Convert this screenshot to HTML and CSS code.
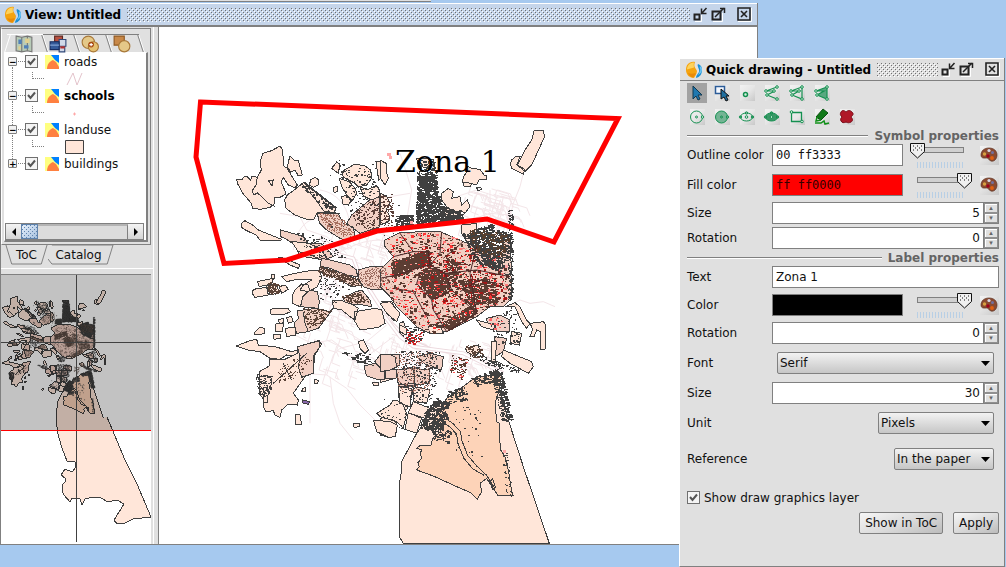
FILE: index.html
```html
<!DOCTYPE html>
<html lang="en">
<head>
<meta charset="utf-8">
<title>View: Untitled</title>
<link rel="stylesheet" href="styles.css">
</head>
<body>
<svg class="defs" aria-hidden="true">
  <symbol id="logo" viewBox="0 0 18 18"><path d="M10 1C4 0 1 4 1 9c0 5 4 8 8 8 1-2 3-4 3-7-1-3-4-4-2-9z" fill="#f5a30f"/><path d="M9 1.500C5 1 2 5 2 8.500c2-1 5-1 7-2 0-1-.5-3 0-5z" fill="#fdd25c"/><path d="M3 12c2 1 5 1 8 0-1 2-2 4-3 4.500-2-.5-4-2-5-4.500z" fill="#e88a08"/><path d="M13 3c-1.500 2 2 5 1 8-1 2-3 3-3 6 4-1 6-4 6-8 0-3-1-5-4-6z" fill="#1b8fd4"/><path d="M15 5c-1 2 1 3 0 5l-2 4c3-2 4-3 4-6 0-1-1-2-2-3z" fill="#6cc4f2"/></symbol>
  <symbol id="w-min" viewBox="0 0 15 15"><path d="M2 14.500h6.500V8" fill="none" stroke="#fff"/><path d="M1.500 7.500h5v5h-5z" fill="none" stroke="#222" stroke-width="2"/><path d="M8.500 1.500v5h5M9 6l4.500-5" fill="none" stroke="#222" stroke-width="1.500"/></symbol>
  <symbol id="w-max" viewBox="0 0 15 15"><path d="M2 14.500h9.500V6" fill="none" stroke="#fff"/><path d="M1.500 4.500h8v8h-8z" fill="none" stroke="#222" stroke-width="2"/><path d="M4 10l9-9M9 1.500h4.500V6" fill="none" stroke="#222" stroke-width="1.500"/></symbol>
  <symbol id="w-close" viewBox="0 0 15 15"><path d="M1 14.500h13.500V1" fill="none" stroke="#fff"/><path d="M1 1h12v12H1z" fill="none" stroke="#222" stroke-width="1.600"/><path d="M4 4l6 6M10 4l-6 6" stroke="#222" stroke-width="1.600"/></symbol>
  <symbol id="layer" viewBox="0 0 14 14"><path d="M0 0h14v14H0z" fill="#ffff80"/><path d="M6 0h8v8L10 5z" fill="#0080ff"/><path d="M2 14c0-5 3-8 6-9l3 2 3 5v2z" fill="#ff8040"/></symbol>
  <symbol id="palette" viewBox="0 0 18 18"><path d="M9 2c5 0 8 3 8 7s-3 7-6 6-2-3-4-3-6 1-6-3 3-7 8-7z" fill="#8a4a30" stroke="#5e3020" stroke-width=".7"/><circle cx="9" cy="4.500" r="1.600" fill="#d9d9e8"/><circle cx="4.500" cy="8" r="1.700" fill="#d8a040"/><circle cx="8" cy="10" r="1.700" fill="#a00018"/><circle cx="12.500" cy="6.500" r="1.500" fill="#7070a0"/><circle cx="12" cy="12" r="1.900" fill="#e06010"/></symbol>
</svg>

<main class="desktop">
  <div class="back-window"></div>

  <section class="window view" aria-label="View: Untitled">
    <header class="titlebar">
      <svg class="logo"><use href="#logo"/></svg>
      <h1 class="title">View: Untitled</h1>
      <span class="bumps"></span>
      <button class="wbtn" aria-label="Minimize"><svg><use href="#w-min"/></svg></button>
      <button class="wbtn" aria-label="Maximize"><svg><use href="#w-max"/></svg></button>
      <button class="wbtn close" aria-label="Close"><svg><use href="#w-close"/></svg></button>
    </header>
    <div class="workspace">
      <aside class="side">
        <div class="toc">
          <div class="tabs-top">
            <button class="tab first" aria-label="Map"><svg viewBox="0 0 16 16"><path d="M1 1l5 1 5-1 4 1v13l-4-1-5 1-5-1z" fill="#b8cbb8" stroke="#777"/><path d="M6 2v13M11 1v13" stroke="#777"/><path d="M3 4h3v4H3zM8 9h4v3H8z" fill="#5080b8"/><path d="M9 3h4v4H9zM3 10h2v3H3z" fill="#e0d090"/></svg></button>
            <button class="tab" aria-label="Tables"><svg viewBox="0 0 16 16"><path d="M5 1h7v5H5z" fill="#b85040" stroke="#602820"/><path d="M9 4h6v6H9zM9 10h5v5H9z" fill="#d0d8e8" stroke="#304878"/><path d="M1 6h8v7H1z" fill="#345a9a" stroke="#182c60"/><path d="M1 9h8" stroke="#88a8d8"/><path d="M10 11h4" stroke="#b03030" stroke-width="2"/></svg></button>
            <button class="tab" aria-label="Overlap"><svg viewBox="0 0 16 16"><circle cx="6.500" cy="6.500" r="5.500" fill="#e4c888" stroke="#a87838"/><circle cx="11" cy="10.500" r="4.500" fill="#e4c070" stroke="#a87838"/><circle cx="9" cy="8.500" r="2.500" fill="#a84810"/><path d="M7.500 8.500h3M9 7v3" stroke="#fff"/></svg></button>
            <button class="tab" aria-label="Shapes"><svg viewBox="0 0 16 16"><path d="M1 1h9v8H1z" fill="#c88848" stroke="#905820"/><circle cx="10" cy="10" r="5" fill="#e4c888" stroke="#a87838"/></svg></button>
          </div>
          <div class="tree-box">
            <ul class="tree">
              <li><div class="node"><button class="toggle" aria-label="Collapse roads">−</button><input type="checkbox" id="l1" checked><svg class="lay"><use href="#layer"/></svg><label for="l1">roads</label></div>
                <div class="legend"><svg viewBox="0 0 20 14"><path d="M2 13L8 1l4 12 5-12" fill="none" stroke="#e4c4cc"/></svg></div></li>
              <li><div class="node"><button class="toggle" aria-label="Collapse schools">−</button><input type="checkbox" id="l2" checked><svg class="lay"><use href="#layer"/></svg><label for="l2" class="active">schools</label></div>
                <div class="legend"><svg viewBox="0 0 20 14"><path d="M8 8h3M9.500 6.500v3" stroke="#ffa8a8"/></svg></div></li>
              <li><div class="node"><button class="toggle" aria-label="Collapse landuse">−</button><input type="checkbox" id="l3" checked><svg class="lay"><use href="#layer"/></svg><label for="l3">landuse</label></div>
                <div class="legend"><svg viewBox="0 0 20 14"><path d="M.5.5h18v13H.5z" fill="#ffe6d9" stroke="#404040"/></svg></div></li>
              <li><div class="node"><button class="toggle" aria-label="Expand buildings">+</button><input type="checkbox" id="l4" checked><svg class="lay"><use href="#layer"/></svg><label for="l4">buildings</label></div></li>
            </ul>
            <div class="hscroll"><button aria-label="Scroll left"><svg viewBox="0 0 8 8"><path d="M6 0v8L2 4z"/></svg></button><span class="thumb"></span><span class="track"></span><button aria-label="Scroll right"><svg viewBox="0 0 8 8"><path d="M2 0v8l4-4z"/></svg></button></div>
          </div>
        </div>
        <div class="tabs-bottom">
          <button class="btab"><svg viewBox="0 0 45 20" preserveAspectRatio="none"><path d="M1 0l6 19h31l6-19" fill="none" stroke="#808080"/></svg><span>ToC</span></button>
          <button class="btab"><svg viewBox="0 0 68 20" preserveAspectRatio="none"><path d="M4 0h63l-6 19H4L0 14" fill="none" stroke="#808080"/></svg><span>Catalog</span></button>
        </div>
        <div class="split-h"></div>
        <svg class="overview" viewBox="1 275 150 269" preserveAspectRatio="xMinYMin slice" role="img" aria-label="Overview map">
          <use href="#city" transform="translate(-77 247) scale(.335)"/>
          <g id="overview-specks" transform="translate(-77 247) scale(.335)"></g>
          <path class="land" d="M57 428l1 6 4 14 5 13 8 1 1 5-4 5-7-3-4 6 4 3v4l-3 3v6l2 4 6 7 2-4 8 1 2 6 3-6 8-2 8 1 7 4 9-2 7 4-10 16 3 4 8-1 8-4 18-2-14-33-12-24-18-43"/>
          <path d="M0 275h151v155H0z" fill="#000" fill-opacity=".24"/>
          <path d="M76.500 275v267M0 342.500h151" stroke="#404040"/>
          <path d="M0 430.500h151" stroke="#f00"/>
        </svg>
      </aside>
      <div class="split-v"></div>
      <svg class="map" viewBox="159 27 598 517" preserveAspectRatio="xMinYMin slice" role="img" aria-label="City map with Zona 1">
        <g id="city-roads" class="roads"></g>
        <g class="roads" transform="translate(220 240) scale(.33333)">
          <path d="M215 280l60 30 60-10 40 30M250 400l70 5 60 40 40 50 50 50M320 405l20-60 20-20 80-20 60-50M330 410l10 80 20 60 40 50M270 400v150M440 350l80-60M340 250l80 50 90 60M300 180l60-80M380 330l-60-30 20-60"/>
        </g>
        <g class="roads wide" transform="translate(220 240) scale(.33333)"><path d="M300-10l60 55 40 10 15 40 50 80 50 75 50 50 60 25"/><path class="core" d="M300-10l60 55 40 10 15 40 50 80 50 75 50 50 60 25"/></g>
        <g class="roads wide" transform="translate(380 210) scale(.33333)"><path d="M0 300l60 80 40 30 150 20 60 30 60 30"/><path class="core" d="M0 300l60 80 40 30 150 20 60 30 60 30"/></g>
        <g class="roads" transform="translate(380 210) scale(.33333)"><path d="M380 290l40-20 30 10 40-5 35 15"/></g>
        <g class="roads" transform="translate(380 90) scale(.33333)"><path d="M430 250l-10 40-20 50-15 60M60 190l20 60 15 50-15 90M30 320l60-10M230 320l60-20 60 20 60 10M270 390l60-20 60 5M300 290l-20 50M330 300v60M370 320l-10 50"/></g>
        <g class="roads" transform="translate(180 90) scale(.33333)"><path d="M300 370l60 10 20 40 60 20 60 50M340 480c10-80 60-110 110-90M420 300c60 10 90 60 90 120M430 510c50-20 100-60 170-60"/></g>
        <g id="city">
          <g class="land" transform="translate(380 370) scale(.33333)">
            <path d="M125 170l-15 20-45 85v25l-5 30v120l-2 50 12 20h438l-78-230-45-140-35-120-50-10-100 70-40 20z"/>
            <path class="orange" d="M200 85l90-65 75-5-7 45-13 40 5 55 10 5-2 40 4 40 13 20 10 40 10 65 5 13h-45l-35-53-20 15 5 25-13 23-17-18-10-5-35-15-70-32-50-18 8-10-4-12 12-14-6-14 6-10-16-5 8-7 35-3 5-20 25-20-20-35 10-20z"/>
            <path class="plain" d="M200 147l20 15 22 23 3 25 18 46 27 32 30 28 25 40M190 157l22 16 18 20 3 25 18 46 27 32 34 20M330 335l8-8 8 25-8 6z"/>
            <path d="M0 145l30-5 20 20-2 30-18 13-30-8zM55 60l45 5-20 55-20-5zM100 95l50 20-15 30-50-17zM85 128l40 17-15 45-35-12zM0 0h45v25L0 38zM50 0h50v50H55z"/>
          </g>
          <g class="land" transform="translate(180 90) scale(.33333)">
            <path d="M300 168l8 12 3 48 11 7 8 15 22 35-7 8-20-8-15-23-7 13 12 27 3 10-18 10-16 0 1 18-15 12-30 6-22-3-4-15-24-28-18-32-2-12 16 2 4-8 10-4 12 12 4-12 16 4 12-22-4-22 8-28 27-8z"/>
            <path class="plain" d="M232 262l-4 23-12 18 6 12 10-7 33 32 20 10M265 272l15-2-4 18z"/>
            <path d="M330 198l12 12 13 2 12 43-12 3-10-18-13 6-10-16 4-18zM392 270l13-8 12 8-2 15-15 7-12-7zM370 278l98 77-6 13h-50l-12 22h-15l-40-15-27-20-4-25 8-15 23-17z"/>
            <path class="plain" d="M372 276l98 78M366 282l40 45 25 36 50 8"/>
            <path class="pink" d="M412 370l63 2 15 28 30 12 5 28-15 15-30-10-40-25-22-22zM302 420l43 12 25 8 15 20 40 2 20 18 15 20-30 10-70-12-10-23-5-10-25-17-18-8zM515 375l30-25 30-25 25-10v95l-60 20-40-30z"/>
            <path d="M184 400l11-8 23 13 17 15 30 12 40 16-5 4-60-2-12-15-28-13-16-10zM470 216l10 6-5 28-20-15zM485 245l40-23 30 6 17 12 3 25-15 20-25 5-10-10-35-18zM478 265l30 10 17 20 5 15-15 25-15-20-15-25zM485 320l15-4 15 14-10 15-17-3zM540 290l20 10 30-15 8 15v20l-23 10-25-12zM588 215h20l8 40-20 15zM460 292l12-2 2 15-12 2z"/>
          </g>
          <g class="land" transform="translate(380 90) scale(.33333)">
            <path d="M395 210l13-12 12 2-10 25 25 13-5 14-35-17-4-13zM462 122h28l4 18-14 30-25 55-20 20-23-20 23-45 20-30zM262 228l13 7 25 3 12 17 8 3v10h-22l-8 17-28-7-14-2 2-16 8-10zM248 276l27 4-5 10-18-2zM110 205l50 3 5 32-25-5-25-10zM0 210l18 10 2 30 5 15-10 20-15-23zM0 310l20 8 10 22-12 20 12 20-5 15-25 10zM185 310l20-15 15 10-5 20 25-5 5 25 17-15 8 20-15 20-15-10-5 25-30 5-15-20 10-20-15-20zM245 405l45-5v50l-30 5-15-25z"/>
            <path class="plain" d="M290 293l12-2 2 8-10 3z"/>
          </g>
          <g class="land" transform="translate(220 240) scale(.33333)">
            <path d="M215 5l45 3 40 17 15 20-20 10-35-15-25-5zM175 52l20 3 45 20-5 10-25-10zM112 125l48-10-5 17-37 8zM100 148l40-6 5 23-40 7-8-12zM140 138l30-3 8 23-28 7zM178 140l17-5 10 13-20 12zM155 105h10v12h-10zM185 110l40-10 45-8h30l5 20-15 30-25 13-25-5 10-15 25-15-45-2-30 7zM225 150l20-18 20 3 5 20-20 20-10 25-22-10v-25zM150 208l15-3 40 2 7 8-17 7-30 3-12-3zM200 232l15-2 5 15-15 5zM175 240l15-5 2 13-14 2zM168 252l22-2-2 25h-20zM195 265l30-3 3 23-28 5zM160 285l20-3 2 13-20 3zM105 275l15-13 15 3v15l-20 5h-13zM48 318l42-16 20-4 5 17 50 5 50 15 17-5v20l-32-5-20 13-30-3-30-20-35-5z"/>
            <path d="M232 320l63-18 10 10-20 33v15l-7 20 2 20-15 5-10 5-35 50 15 20-3 15-27-3-20 18-5 22-15-7-5-13-22 3-8-15 2-20-14-20 2-30-2-35 30-17 2-20 40 2 42-20z"/>
            <path class="pink" d="M248 170l22-20 22 5 6 30-3 20-53-5zM232 212l58-7 40 10 10-10-22 30-23 30-30 10-35 5-8-30 13-15zM232 320l68-18v18l-18 25-2 55-35 12-10-32 5-30zM305 55l25 5 60 15 20 15 2 20-32-5-50-20-30-7zM300 82l70 18 45 20 10 15-30 5-55-30-40-15zM415 90l35-10h45l5 30 15 10-15 30h-40l-30-10-15-25zM370 175l30-17 25-8 25 30 5 20-25-5-55-5z"/>
            <path class="plain" d="M250 215l5 35 10 25M160 430l100-90M190 370l25 50"/>
            <path d="M338 182l22-2 40 15 15 10-10 35-15-10-25-20-25-5zM405 215l60-10 20 5 10 40-20 12-55 8-15-25zM485 185l30-2 15 37-10 20-20-25zM415 305l15-5 15 30-10 10-15-15zM458 428h17v10h-15zM538 250l12-5 10 25-10 20-12-15zM228 525h12l5 30h-17zM285 418l10 4-2 10-10-2zM248 445l10-2v12h-13zM400 552l20-2-2 10-16 2zM470 520l40-25 10-15 25 5 15 35-10 45-20-20-50-15zM460 540l50 5 22 10-7 35-20 2-35-17zM120 410l20-5 15 10-3 30-20 10-12-18zM130 470l12-3v20h-12z"/>
            <path class="pink" d="M432 378l33-8 30 20-3 30-22-2-30-10zM465 365l15-20h30l5 25-15 20-25-10zM508 345h32v30l-25 15-15-5zM495 390l35-2-2 27h-30zM530 390l55-10v55l-45 5z"/>
            <path class="purple" d="M248 480l20 5-2 8-18-4z"/>
          </g>
          <g class="land" transform="translate(380 210) scale(.33333)">
            <path class="pink" d="M15 90l45-22 70-3h50l70 30 40 15 60 30 45 60v65l-25 25h-40l-40 30-50 25-40 20-50 5-40-20-30-30-30-30-20-30-30-30v-50l40-40-25-30z"/>
            <path class="pink" d="M370 90h20l5 105-35-5-5-40zM320 325l40-10 30 15v35h-40l-5-20-23-5zM345 380l35 5-10 40-25 15zM0 435l25-3 20 8 5 30-20 10-30 5zM50 480l50-5 5 45-50 5zM100 475l50 5v40l-45 5zM110 440l40-10 40 10-5 40-40-10z"/>
            <path d="M375 290l30-12 15 12 20 40 10 10-10 15-15-20-20-45zM450 340l40-5 7 10-2 73h-12v-53l-13-5-8 20h-12l8-23zM370 420l85 35 5 15-15 20-55-30-25-20zM395 365l30 5-7 35-28-5zM290 330l55 15-5 15-35-10zM255 415l40-10 5 20-15 15-25-15zM335 395l15 0-5 65-10-5zM55 530l40 5-5 55-30-10zM100 530l50 10-10 40-40-5zM145 350l35-5 10 25-40 2zM60 345l20 10-2 20-18-10zM0 280l30-5 30 35-10 25-30-25z"/>
          </g>
        </g>
        <g id="city-specks"></g>
        <g transform="translate(380 210) scale(.33333)"><path class="district" d="M40 140l60-15h45l5 40M0 205l50-10 60-20 40-10 45 25 20 50M150 165l30-35 5-65M215 240l75 70-90 55M155 270l5 30 40 65M40 235l60 10 40 75M195 190l95-10 100 20M240 245l60-35 50 10M250 95l-60 50M60 70l40 55M290 110l-20 80 20 120M120 190l-10 30 45 50 60-30"/></g>
        <path class="dots-pink" d="M387 153h4v3h-4zM389 156h3v3h-3zM503 450h3v3h-3zM505 265h3v3h-3zM410 221h3v3h-3z"/>
        <path d="M200.500 102L618 118.500 554 242l-67-23-110 12-90 29-63 3.500L196 157z" fill="none" stroke="#f00" stroke-width="5"/>
        <text class="zone" x="395" y="172">Zona 1</text>
      </svg>
    </div>
  </section>

  <section class="window dialog" aria-label="Quick drawing - Untitled">
    <header class="titlebar">
      <svg class="logo"><use href="#logo"/></svg>
      <h2 class="title">Quick drawing - Untitled</h2>
      <span class="bumps"></span>
      <button class="wbtn" aria-label="Minimize"><svg><use href="#w-min"/></svg></button>
      <button class="wbtn" aria-label="Maximize"><svg><use href="#w-max"/></svg></button>
      <button class="wbtn close" aria-label="Close"><svg><use href="#w-close"/></svg></button>
    </header>
    <form class="form" onsubmit="return false">
      <div class="tools">
        <button class="tool on" aria-label="Select"><svg viewBox="0 0 20 20"><path d="M6 3v13l3-3 2 4 2-1-2-4h4z" fill="#1f78b0" stroke="#103850"/></svg></button>
        <button class="tool lit" aria-label="Select area"><svg viewBox="0 0 20 20"><path d="M3.500 3.500h9v7h-9z" fill="#f4f8ff" stroke="#2c5c98" stroke-width="1.500"/><path d="M9 6v10l3-2 2 4 2-1-2-4h3z" fill="#1f6fa0" stroke="#111"/></svg></button>
        <button class="tool lit" aria-label="Point"><svg viewBox="0 0 20 20"><circle cx="8.500" cy="11.500" r="2" fill="#d6f0e0" stroke="#149050" stroke-width="1.500"/></svg></button>
        <button class="tool lit" aria-label="Polyline"><svg viewBox="0 0 20 20"><path d="M15 4L4 8l9 0-8 4 10 4" fill="none" stroke="#149050" stroke-width="1.200"/><g fill="#e0f4e8" stroke="#149050"><circle cx="15" cy="4" r="1.300"/><circle cx="4" cy="8" r="1.300"/><circle cx="12" cy="8" r="1.300"/><circle cx="5" cy="12" r="1.300"/><circle cx="15" cy="16" r="1.300"/></g></svg></button>
        <button class="tool lit" aria-label="Polygon"><svg viewBox="0 0 20 20"><path d="M15 4L4 8l8 0-7 4 10 4z" fill="none" stroke="#149050" stroke-width="1.200"/><g fill="#e0f4e8" stroke="#149050"><circle cx="15" cy="4" r="1.300"/><circle cx="4" cy="8" r="1.300"/><circle cx="12" cy="8" r="1.300"/><circle cx="5" cy="12" r="1.300"/><circle cx="15" cy="16" r="1.300"/></g></svg></button>
        <button class="tool lit" aria-label="Filled polygon"><svg viewBox="0 0 20 20"><path d="M15 4L4 8l8 0-7 4 10 4z" fill="#58a880" stroke="#149050" stroke-width="1.200"/><g fill="#e0f4e8" stroke="#149050"><circle cx="15" cy="4" r="1.300"/><circle cx="4" cy="8" r="1.300"/><circle cx="5" cy="12" r="1.300"/><circle cx="15" cy="16" r="1.300"/></g></svg></button>
      </div>
      <div class="tools">
        <button class="tool lit" aria-label="Circle"><svg viewBox="0 0 20 20"><g fill="none" stroke="#149050"><circle cx="9.500" cy="10" r="6"/><circle cx="9.500" cy="10" r="1"/><circle cx="15.500" cy="10" r="1.200" fill="#e0f4e8"/></g></svg></button>
        <button class="tool lit" aria-label="Filled circle"><svg viewBox="0 0 20 20"><g fill="#74b494" stroke="#149050"><circle cx="9.500" cy="10" r="6"/><circle cx="9.500" cy="10" r="1"/><circle cx="15.500" cy="10" r="1.200"/></g></svg></button>
        <button class="tool lit" aria-label="Ellipse"><svg viewBox="0 0 20 20"><g fill="none" stroke="#149050"><ellipse cx="9.500" cy="10" rx="6" ry="4"/><circle cx="9.500" cy="10" r="1.300"/><circle cx="15.500" cy="10" r="1.200"/><circle cx="3.500" cy="10" r="1.200"/><circle cx="9.500" cy="6" r="1.200"/></g></svg></button>
        <button class="tool lit" aria-label="Filled ellipse"><svg viewBox="0 0 20 20"><g fill="#3c9868" stroke="#149050"><ellipse cx="9.500" cy="10" rx="6" ry="4"/><circle cx="9.500" cy="10" r="1.300" fill="#d6f0e0"/><circle cx="15.500" cy="10" r="1.200"/><circle cx="3.500" cy="10" r="1.200"/><circle cx="9.500" cy="6" r="1.200"/></g></svg></button>
        <button class="tool lit" aria-label="Rectangle"><svg viewBox="0 0 20 20"><path d="M4.500 5.500h10v9h-10z" fill="none" stroke="#149050" stroke-width="1.300"/><g fill="#e0f4e8" stroke="#149050"><circle cx="4.500" cy="5" r="1.300"/><circle cx="15" cy="14.500" r="1.300"/></g></svg></button>
        <button class="tool lit" aria-label="Freehand"><svg viewBox="0 0 20 20"><path d="M11 2l5 4-7 7-5-3z" fill="#107818" stroke="#0b5010"/><path d="M5 10l-1 4 5-1M3 16h6l3-2 1 3 4-1" fill="none" stroke="#109018" stroke-width="1.500"/></svg></button>
        <button class="tool lit" aria-label="Delete"><svg viewBox="0 0 20 20"><path d="M4 5c1-2 3-2 5 0 2-2 4-2 6 0s1 3-1 5c2 2 2 4 0 5s-3 1-5 0c-2 1-4 1-5-1s0-3 1-4c-2-2-2-3-1-5z" fill="#b01828" stroke="#780c18"/></svg></button>
      </div>

      <h3 class="group">Symbol properties</h3>
      <div class="row color"><label for="oc">Outline color</label><input id="oc" class="code" type="text" value="00 ff3333"><span class="slide"><input type="range" aria-label="Outline opacity" min="0" max="255" value="0"></span><button class="pal" aria-label="Pick outline color"><svg><use href="#palette"/></svg></button></div>
      <div class="row color g8"><label for="fc">Fill color</label><input id="fc" class="code red" type="text" value="ff ff0000"><span class="slide"><input type="range" aria-label="Fill opacity" min="0" max="255" value="255"></span><button class="pal" aria-label="Pick fill color"><svg><use href="#palette"/></svg></button></div>
      <div class="row g6"><label for="sz">Size</label><span class="spin"><input id="sz" type="number" value="5"><span><button aria-label="Increase">▴</button><button aria-label="Decrease">▾</button></span></span></div>
      <div class="row g3"><label for="ro">Rotation</label><span class="spin"><input id="ro" type="number" value="0"><span><button aria-label="Increase">▴</button><button aria-label="Decrease">▾</button></span></span></div>

      <h3 class="group second">Label properties</h3>
      <div class="row"><label for="tx">Text</label><input id="tx" type="text" value="Zona 1"></div>
      <div class="row color g6"><label for="lc">Color</label><input id="lc" class="black" type="text" value=""><span class="slide"><input type="range" aria-label="Label opacity" min="0" max="255" value="255"></span><button class="pal" aria-label="Pick label color"><svg><use href="#palette"/></svg></button></div>
      <div class="row g6"><label for="lr">Rotation</label><span class="spin"><input id="lr" type="number" value="0"><span><button aria-label="Increase">▴</button><button aria-label="Decrease">▾</button></span></span></div>
      <div class="row g8"><label for="fo">Font</label><select id="fo" class="wide"><option>Serif</option></select></div>
      <div class="row g8"><label for="ls">Size</label><span class="spin"><input id="ls" type="number" value="30"><span><button aria-label="Increase">▴</button><button aria-label="Decrease">▾</button></span></span></div>
      <div class="row g8"><label for="un">Unit</label><select id="un" class="mid"><option>Pixels</option></select></div>
      <div class="row g14"><label for="re">Reference</label><select id="re" class="small"><option>In the paper</option></select></div>
      <div class="check g14"><input type="checkbox" id="sd" checked><label for="sd">Show draw graphics layer</label></div>
      <div class="actions"><button class="push">Show in ToC</button><button class="push">Apply</button></div>
    </form>
  </section>
</main>
<script src="map.js"></script>
</body>
</html>
```
FILE: styles.css
```css
*, *::before, *::after { box-sizing: border-box; }
body { margin: 0; font: 12px/16px "DejaVu Sans", sans-serif; color: #111; background: #a6c9ef; }
button, input, select { font: inherit; color: inherit; margin: 0; padding: 0; border: 0; border-radius: 0; outline: 0; }
button { background: none; }
svg { display: block; }
.defs { position: absolute; width: 0; height: 0; }
.desktop { position: relative; height: 100vh; min-height: 567px; overflow: hidden; }
.back-window { width: 431px; height: 2px; background: #e0e0e0; border-bottom: 1px solid #808080; }

.window { position: absolute; display: flex; flex-direction: column; border-right: 1px solid #808080; border-bottom: 1px solid #808080; }
.view { left: 0; right: 248px; top: 3px; bottom: 22px; background: #e0e0e0; }
.dialog { right: 1px; top: 58px; bottom: 0; width: 326px; background: #e0e0e0; border-left: 1px solid #fff; }

.titlebar { display: flex; align-items: center; flex: none; height: 24px; padding: 0 5px 0 4px; border-top: 1px solid #fff; border-bottom: 2px solid #808080; background: #c5d5ea; }
.dialog .titlebar { height: 23px; border-bottom-width: 1px; background: #e0e0e0; padding: 0 4px 0 5px; }
.logo { width: 18px; height: 18px; margin-right: 3px; }
.title { margin: 0; font-size: 12px; line-height: 16px; font-weight: bold; color: #000; white-space: nowrap; }
.bumps { flex: 1; height: 14px; margin: 0 3px 0 6px;
  background: url("data:image/svg+xml,%3Csvg xmlns='http://www.w3.org/2000/svg' width='4' height='4'%3E%3Cpath d='M0 0h1v1H0zM2 2h1v1H2z' fill='%23707070'/%3E%3Cpath d='M1 1h1v1H1zM3 3h1v1H3z' fill='%23fff'/%3E%3C/svg%3E"); }
.wbtn { width: 15px; height: 15px; margin-right: 3px; }
.wbtn svg { width: 15px; height: 15px; }
.close { margin: 0 0 0 8px; }

.workspace { flex: 1; min-height: 0; display: grid; grid-template-columns: 153px 6px 1fr; }
.side { display: flex; flex-direction: column; min-height: 0; border-left: 1px solid #808080; }
.split-v { border-left: 1px solid #fff; border-right: 1px solid #808080; }
.split-h { height: 6px; border-top: 1px solid #fff; }
.map { width: 100%; height: 100%; min-height: 0; background: #fff; }

.toc { margin: 1px 2px 0 0; padding: 5px 2px 2px; height: 217px; display: flex; flex-direction: column; border: 1px solid #808080; border-left-color: #fff; }
.tabs-top { display: flex; height: 18px; padding-left: 3px; }
.tab { position: relative; width: 32px; padding-right: 2px; border-top: 1px solid #808080; display: flex; justify-content: center; align-items: center; }
.tab.first { width: 36px; border-top-color: #fff; }
.tab svg { width: 18px; height: 18px; }
.tab::after { content: ""; position: absolute; top: 0; right: -2px; width: 1px; height: 17px; background: #808080; box-shadow: 1px 0 #fff; transform: skewX(18deg); }
.tab.first::before { content: ""; position: absolute; top: 0; left: 0; width: 1px; height: 17px; background: #fff; transform: skewX(-18deg); }
.tree-box { flex: 1; display: flex; flex-direction: column; border: 1px solid #fff; border-right: 2px solid #808080; border-bottom: 2px solid #808080; background: #fff; }
.tree { flex: 1; margin: 0; padding: 0 0 0 3px; list-style: none; }
.tree li { position: relative; }
.tree li:not(:last-child)::before { content: ""; position: absolute; left: 4px; top: 14px; height: 26px; border-left: 1px dotted #808080; }
.node { display: flex; align-items: center; height: 17px; font-size: 12px; }
.toggle { width: 9px; height: 9px; margin-right: 8px; border: 1px solid #808080; border-radius: 1px; font-size: 9px; line-height: 6px; font-weight: bold; color: #000; background: #f2f2f2; position: relative; }
.toggle::after { content: ""; position: absolute; left: 9px; top: 3px; width: 7px; border-top: 1px dotted #808080; }
.lay { width: 14px; height: 14px; margin: 0 5px 0 7px; }
.active { font-weight: bold; color: #000; }
.legend { height: 17px; padding: 2px 0 0 57px; position: relative; }
.legend::before { content: ""; position: absolute; left: 24px; top: 2px; width: 12px; height: 7px; border-left: 1px dotted #808080; border-bottom: 1px dotted #808080; }
.legend svg { width: 20px; height: 14px; }
input[type=checkbox] { appearance: none; width: 13px; height: 13px; border: 1px solid #707070; background: #f4f4f4 url("data:image/svg+xml,%3Csvg xmlns='http://www.w3.org/2000/svg' viewBox='0 0 11 11'%3E%3Cpath d='M2 5l2.500 3L9 2.500' fill='none' stroke='%23555' stroke-width='2'/%3E%3C/svg%3E") center/11px; }
.hscroll { display: flex; height: 17px; margin-right: 2px; border: 1px solid #808080; background: #dcdcdc; }
.hscroll button { width: 15px; display: grid; place-items: center; background: linear-gradient(#f4f4f4, #d4d4d4); }
.hscroll svg { width: 8px; height: 8px; }
.thumb { width: 17px; border: 1px solid #5f83ad; background: url("data:image/svg+xml,%3Csvg xmlns='http://www.w3.org/2000/svg' width='4' height='4'%3E%3Cpath d='M0 0h1v1H0zM2 2h1v1H2z' fill='%235f83ad'/%3E%3C/svg%3E") 2px 2px, linear-gradient(135deg, #e4eefa, #a9c3e0); }
.track { flex: 1; border-top: 2px solid #b4b4b4; border-right: 1px solid #808080; }
.tabs-bottom { display: flex; height: 23px; padding-left: 4px; }
.btab { position: relative; width: 43px; height: 20px; font-size: 12px; line-height: 18px; }
.btab + .btab { width: 66px; padding-right: 5px; }
.btab svg { position: absolute; inset: 0; width: 100%; height: 100%; }
.overview { flex: 1; width: 150px; min-height: 0; background: #fff; border-top: 1px solid #808080; }

.land path { fill: #ffe6d9; stroke: #404040; stroke-width: 1px; vector-effect: non-scaling-stroke; shape-rendering: crispEdges; }
path.land { fill: #ffe6d9; stroke: #404040; shape-rendering: crispEdges; }
.land .orange { fill: #fdd3b8; }
.land .pink { fill: #f2d0c4; }
.land .purple { fill: #8866aa; }
.land .plain { fill: none; }
.district { fill: none; stroke: #4c2828; stroke-width: 1px; vector-effect: non-scaling-stroke; }
.roads path { fill: none; stroke: #f4e6e9; stroke-width: 1px; vector-effect: non-scaling-stroke; }
.wide path { stroke: #ecd8dd; stroke-width: 4px; }
.wide .core { stroke: #fff; stroke-width: 2px; }
.dots-pink { fill: #ffa8a8; }
.zone { font: 30px "DejaVu Serif", serif; fill: #000; }

.form { padding: 2px 5px 0 7px; }
.tools { display: flex; gap: 5px; margin-bottom: 4px; }
.tool { width: 20px; height: 20px; }
.tool svg { width: 20px; height: 20px; }
.lit { background: linear-gradient(135deg, #f2f2f2, #e6e6e6 50%, #c8c8c8) center/15px 16px no-repeat; }
.on { background: #a2a2a2; }
.group { display: flex; align-items: center; gap: 6px; margin: -2px 0 0; padding-bottom: 1px; height: 15px; font-size: 12px; line-height: 12px; font-weight: bold; color: #646464; }
.group::before { content: ""; flex: 1; height: 2px; background: #fff; border-top: 1px solid #808080; }
.second { margin: 0; height: 17px; padding: 1px 0 0; }
.row { display: grid; grid-template-columns: 85px 1fr; align-items: center; min-height: 22px; }
.row.color { grid-template-columns: 85px 1fr 69px 27px; }
.row > label { white-space: nowrap; }
.g3 { margin-top: 3px; }
.g6 { margin-top: 6px; }
.g8 { margin-top: 8px; }
.g14 { margin-top: 14px; }
input[type=text], .spin { width: 100%; height: 22px; border: 1px solid #808080; background: #fff; }
input[type=text] { padding: 0 3px; }
input.code { font-family: "DejaVu Sans Mono", monospace; }
input[type=text].red { background: #f00; color: #300; }
input[type=text].black { background: #000; }
.spin { display: flex; min-width: 0; }
.spin input { flex: 1; min-width: 0; padding-right: 3px; text-align: right; background: none; appearance: textfield; }
.spin input::-webkit-inner-spin-button { appearance: none; }
.spin > span { width: 15px; display: flex; flex-direction: column; border-left: 1px solid #808080; background: #e0e0e0; }
.spin button { flex: 1; height: 10px; border: 1px solid #909090; box-shadow: inset 1px 1px #fff; font-size: 7px; line-height: 7px; color: #666; }
.slide { height: 28px; margin: 0 0 -6px 7px; background: repeating-linear-gradient(90deg, #b8cfe5 0 1px, transparent 1px 3px) 7px 18px/47px 6px no-repeat; align-self: start; }
.slide input { display: block; width: 62px; height: 17px; margin-top: -2px; appearance: none; background: linear-gradient(#d0d0d0, #d0d0d0) 8px 6px/45px 4px no-repeat, linear-gradient(#808080, #808080) 7px 5px/47px 6px no-repeat; }
.slide input::-webkit-slider-thumb { appearance: none; width: 15px; height: 17px; background: url("data:image/svg+xml,%3Csvg xmlns='http://www.w3.org/2000/svg' viewBox='0 0 15 17'%3E%3Cpath d='M.5 1.500h14v8l-7 6.500-7-6.500z' fill='%23f0f0f0' stroke='%23111'/%3E%3Cpath d='M3 4h1m3 0h1m3 0h1M5 6h1m3 0h1M3 8h1m3 0h1m3 0h1' stroke='%23111'/%3E%3C/svg%3E"); }
.pal { width: 19px; height: 19px; justify-self: end; background: linear-gradient(135deg, #f4f4f4, #c8c8c8); }
.pal svg { width: 18px; height: 18px; }
select { appearance: none; justify-self: end; height: 22px; margin-right: 5px; padding: 0 19px 0 2px; border: 1px solid #808080; border-radius: 2px; background: url("data:image/svg+xml,%3Csvg xmlns='http://www.w3.org/2000/svg' viewBox='0 0 9 5'%3E%3Cpath d='M0 0h9L4.500 5z'/%3E%3C/svg%3E") right 3px center/9px 5px no-repeat, linear-gradient(#f2f2f2, #c6c6c6); }
.wide:is(select) { width: 217px; }
.mid { width: 116px; }
.small { width: 100px; }
.check { display: flex; align-items: center; gap: 4px; height: 27px; }
.actions { display: flex; justify-content: flex-end; gap: 10px; margin-top: 1px; }
.push { height: 22px; padding: 0 5px; border: 1px solid #808080; border-radius: 2px; background: linear-gradient(160deg, #f6f6f6, #dcdcdc 50%, #bcbcbc); }
```
FILE: map.js
```js
// Seeded generator, so that the buildings layer is the same on every load.
let seed = 7;
function rnd() {
  seed = (seed * 1664525 + 1013904223) % 4294967296;
  return seed / 4294967296;
}

function inside(x, y, poly) {
  let hit = false;
  for (let i = 0, j = poly.length - 2; i < poly.length; j = i, i += 2) {
    const yi = poly[i + 1], yj = poly[j + 1];
    if (yi > y !== yj > y && x < ((poly[j] - poly[i]) * (y - yi)) / (yj - yi) + poly[i]) hit = !hit;
  }
  return hit;
}

function box(poly) {
  const xs = poly.filter((v, i) => i % 2 === 0), ys = poly.filter((v, i) => i % 2);
  return [Math.min(...xs), Math.min(...ys), Math.max(...xs), Math.max(...ys)];
}

const NS = "http://www.w3.org/2000/svg";
function addPath(parent, d, attrs) {
  const p = document.createElementNS(NS, "path");
  p.setAttribute("d", d);
  for (const k in attrs) p.setAttribute(k, attrs[k]);
  parent.appendChild(p);
}

// Each zone: colour, number of buildings, largest side, outline.
const city = [385, 240, 400, 233, 440, 232, 476, 246, 500, 262, 511, 277, 511, 298, 490, 308, 460, 325, 430, 333, 407, 318, 390, 296, 381, 280, 392, 258];
const zones = [
  ["#dcae9e", 700, 1, city],
  ["#59392f", 620, 3, city],
  ["#5c3d33", 560, 3, [391, 262, 428, 250, 431, 264, 392, 278]],
  ["#5c3d33", 700, 3, [418, 273, 430, 264, 446, 273, 452, 290, 432, 300, 420, 284]],
  ["#5c3d33", 420, 3, [458, 280, 492, 276, 500, 302, 470, 306]],
  ["#5c3d33", 260, 3, [440, 325, 470, 305, 478, 312, 450, 330]],
  ["#5c3d33", 160, 3, [445, 255, 462, 262, 458, 292, 446, 276]],
  ["#f77", 190, 3, city],
  ["#f33", 170, 3, city],
  ["#a01818", 150, 3, [420, 246, 500, 256, 505, 300, 420, 310]],
  ["#404040", 900, 3, [417, 176, 436, 176, 438, 194, 446, 222, 416, 224]],
  ["#404040", 170, 2, [417, 160, 436, 160, 437, 178, 417, 178]],
  ["#404040", 190, 3, [396, 216, 412, 214, 414, 228, 394, 230]],
  ["#404040", 240, 3, [440, 205, 462, 212, 464, 222, 440, 224]],
  ["#404040", 760, 3, [462, 234, 490, 224, 512, 236, 512, 252, 500, 272, 475, 262]],
  ["#5a3f2c", 220, 2, [470, 228, 510, 234, 505, 258, 472, 252]],
  ["#404040", 180, 2, [508, 210, 513, 210, 513, 300, 508, 300]],
  ["#5a3f38", 260, 2, [352, 214, 366, 203, 380, 196, 392, 194, 394, 228, 372, 230, 356, 226]],
  ["#a87060", 260, 1, [318, 213, 340, 215, 354, 232, 350, 240, 326, 228]],
  ["#404040", 120, 2, [335, 158, 372, 172, 380, 205, 350, 212]],
  ["#404040", 110, 2, [296, 232, 330, 238, 345, 258, 310, 256]],
  ["#404040", 80, 2, [304, 182, 334, 208, 330, 212, 302, 188]],
  ["#5c4438", 240, 2, [320, 266, 358, 278, 362, 287, 340, 282, 318, 272]],
  ["#9c6c60", 220, 1, [358, 270, 385, 266, 390, 282, 380, 290, 362, 284]],
  ["#404040", 60, 2, [318, 272, 350, 290, 335, 304, 320, 300]],
  ["#5c4438", 130, 2, [302, 308, 332, 310, 320, 325, 308, 328]],
  ["#5c4438", 110, 2, [342, 296, 360, 292, 370, 302, 348, 303]],
  ["#5c4438", 90, 2, [268, 282, 280, 284, 278, 296, 268, 292]],
  ["#404040", 100, 2, [256, 374, 272, 376, 270, 394, 258, 396]],
  ["#5c4438", 100, 1, [275, 372, 300, 355, 312, 360, 300, 376, 280, 384]],
  ["#404040", 40, 3, [340, 352, 370, 354, 374, 366, 356, 362]],
  ["#404040", 50, 3, [405, 325, 425, 330, 420, 346, 405, 344]],
  ["#c22", 26, 3, [404, 328, 424, 332, 420, 346, 408, 344]],
  ["#404040", 260, 2, [400, 350, 440, 352, 440, 372, 428, 408, 400, 395]],
  ["#a87060", 200, 1, [396, 352, 434, 352, 430, 392, 398, 392]],
  ["#5c3d33", 90, 2, [452, 355, 470, 360, 462, 380, 450, 372]],
  ["#f55", 10, 3, [452, 355, 470, 360, 462, 380, 450, 372]],
  ["#5c4438", 70, 2, [465, 345, 480, 345, 485, 356, 470, 360]],
  ["#404040", 90, 2, [490, 318, 515, 305, 520, 345, 495, 345]],
  ["#404040", 90, 2, [480, 354, 500, 362, 520, 370, 518, 374, 480, 362]],
  ["#f66", 12, 3, [486, 316, 504, 318, 500, 334, 490, 330]],
  ["#404040", 400, 3, [424, 414, 436, 398, 448, 402, 446, 424, 434, 432, 420, 427]],
  ["#404040", 80, 3, [446, 392, 466, 386, 468, 400, 448, 404]],
  ["#404040", 110, 3, [470, 378, 500, 368, 504, 380, 476, 386]],
  ["#404040", 240, 3, [490, 370, 502, 372, 512, 420, 502, 422]],
  ["#404040", 60, 3, [438, 424, 452, 430, 450, 442, 430, 440]],
  ["#404040", 30, 2, [455, 400, 480, 405, 485, 460, 455, 450]],
  ["#404040", 40, 2, [502, 450, 508, 452, 513, 496, 506, 496]],
  ["#404040", 26, 2, [320, 160, 400, 160, 400, 240, 320, 240]],
  ["#404040", 30, 2, [380, 400, 410, 396, 405, 430, 380, 425]]
];

const specks = document.getElementById("city-specks");
const small = document.getElementById("overview-specks");
for (const [colour, count, side, poly] of zones) {
  const [x0, y0, x1, y1] = box(poly);
  let d = "";
  for (let n = 0, tries = 0; n < count && tries < count * 6; tries++) {
    const x = Math.floor(x0 + rnd() * (x1 - x0)), y = Math.floor(y0 + rnd() * (y1 - y0));
    if (!inside(x + .5, y + .5, poly)) continue;
    const w = 1 + Math.floor(rnd() * side), h = 1 + Math.floor(rnd() * rnd() * side);
    d += `M${x} ${y}h${w}v${h}h-${w}z`;
    n++;
  }
  addPath(specks, d, { fill: colour });
  if (colour === "#404040") addPath(small, d, { fill: "#484848", stroke: "#484848", "stroke-width": 1 });
  else if (colour.startsWith("#5")) addPath(small, d, { fill: "#5c4c44" });
}

// Faint street grids around the town.
const streets = document.getElementById("city-roads");
for (const poly of [
  [300, 315, 350, 300, 400, 340, 380, 375, 310, 370],
  [320, 230, 385, 215, 395, 255, 345, 265],
  [320, 275, 345, 290, 370, 310, 340, 330, 300, 320],
  [450, 335, 500, 345, 470, 385, 440, 370],
  [470, 185, 515, 190, 510, 225, 455, 222],
  [390, 335, 440, 345, 430, 375, 380, 350]
]) {
  const [x0, y0, x1, y1] = box(poly);
  let d = "";
  for (let i = 0; i < 70; i++) {
    const x = x0 + rnd() * (x1 - x0), y = y0 + rnd() * (y1 - y0);
    if (!inside(x, y, poly)) continue;
    const l = 5 + rnd() * 12, turn = rnd() < .5;
    d += turn ? `M${x} ${y}l${l} ${l * .3}l${l * .2} ${l * .5}` : `M${x} ${y}l${-l * .3} ${l}l${l * .5} ${l * .2}`;
  }
  addPath(streets, d, {});
}
```
